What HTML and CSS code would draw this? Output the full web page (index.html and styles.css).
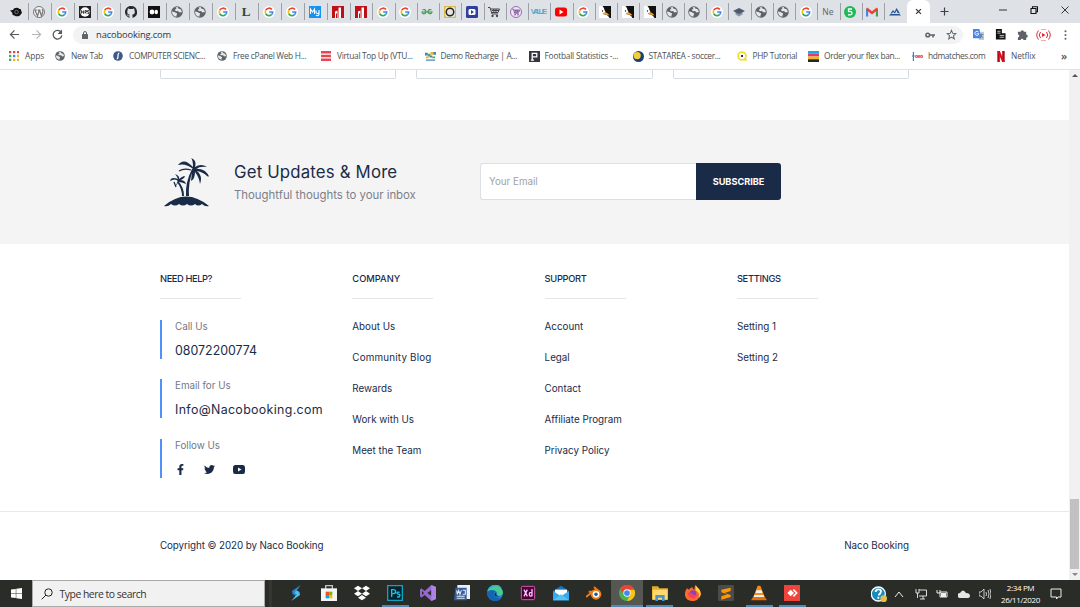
FILE: index.html
```html
<!DOCTYPE html>
<html lang="en">
<head>
<meta charset="utf-8">
<title>Naco Booking</title>
<link rel="stylesheet" href="styles.css">
</head>
<body>
<svg class="defs" width="0" height="0">
  <symbol id="g" viewBox="0 0 24 24"><circle cx="12" cy="12" r="12" fill="#fff"/><g fill="none" stroke-width="3.2"><path d="M18 7.2A7.4 7.4 0 0 0 5.5 8.5" stroke="#ea4335"/><path d="M5.5 8.5a7.4 7.4 0 0 0 0 7" stroke="#fbbc05"/><path d="M5.5 15.5A7.4 7.4 0 0 0 17 17.4" stroke="#34a853"/><path d="M12.3 12h7.1a7.4 7.4 0 0 1-2.4 5.4" stroke="#4285f4"/></g></symbol>
  <symbol id="globe" viewBox="0 0 24 24"><circle cx="12" cy="12" r="11.500" fill="#5f6368"/><path d="M2 11q6 0 8 3c3 0 3 2 1 4v3C6 21 2 17 2 11zM9 3l5-1q-1 3 1 3l5 2q1 3 2 5l-5 1q-1-3-4-3-5 1-5-2 0-2 3-2z" fill="#e5e8ea"/></symbol>
  <symbol id="red" viewBox="0 0 24 24"><path d="M0 0h24v24H0z" fill="#bd1118"/><path d="M6 24V11l5-2v15zM13 3h5v21h-5z" fill="#fff"/><path d="M8 15h2v9H8z" fill="#bd1118"/></symbol>
  <symbol id="bird" viewBox="0 0 24 24"><path d="M0 0h24v24H0z" fill="#fff"/><path d="M7 0h17v24h-3q-3-7-13-8 7-7-1-16z" fill="#111"/><path d="M8 12q8-1 13 7-7-1-14-4z" fill="#f3a32c"/><path d="M1 12c2-7 10-7 12 0-4 3-9 3-12 0z" fill="#fff"/><circle cx="7" cy="10" r="1.300" fill="#111"/></symbol>
  <symbol id="cart" viewBox="0 0 24 24"><path d="M0 3h4l4 13h12M5 6h18l-3 7H7M8 9h14M11 6l1 7M16 6v7" fill="none" stroke="currentColor" stroke-width="2"/><circle cx="9" cy="20" r="2.3" fill="currentColor"/><circle cx="18" cy="20" r="2.3" fill="currentColor"/></symbol>
</svg>

<div class="window">
  <div class="tabstrip">
    <div class="tabs">
      <span class="tab"><svg viewBox="0 0 24 24"><path d="M0 9l6-1c2-5 9-6 13-2 3 0 4 2 3 4 3 2 2 5 0 6-2 5-9 6-13 3-4 0-5-3-4-5z" fill="#111"/><circle cx="13" cy="12" r="3.500" fill="none" stroke="#8b9095" stroke-width="1.500"/></svg></span>
      <span class="tab"><svg viewBox="0 0 24 24"><circle cx="12" cy="12" r="11" fill="#f4f4f4" stroke="#777" stroke-width="2"/><path d="M3 8h5M4 8l5 12 3-9-1-3M9 8h6M13 8l4 12 3-10-2-4" fill="none" stroke="#777" stroke-width="2.4"/></svg></span>
      <span class="tab"><svg><use href="#g"/></svg></span>
      <span class="tab"><svg viewBox="0 0 24 24"><path d="M0 0h24v24H0z" fill="#222"/><circle cx="12" cy="12" r="9.5" fill="#fff"/><path d="M5 15V9l4 6V9M12 15V9h3v3h-3l3 3M20 9h-3v3h3v3h-3" fill="none" stroke="#222" stroke-width="1.6"/></svg></span>
      <span class="tab"><svg><use href="#g"/></svg></span>
      <span class="tab"><svg viewBox="0 0 16 16"><path fill="#24292e" d="M8 0C3.58 0 0 3.58 0 8c0 3.54 2.29 6.53 5.47 7.59.4.07.55-.17.55-.38v-1.49c-2.01.37-2.53-.49-2.69-.94-.09-.23-.48-.94-.82-1.13-.28-.15-.68-.52-.01-.53.63-.01 1.08.58 1.23.82.72 1.21 1.87.87 2.33.66.07-.52.28-.87.51-1.07-1.78-.2-3.64-.89-3.64-3.95 0-.87.31-1.59.82-2.15-.08-.2-.36-1.02.08-2.12 0 0 .67-.21 2.2.82a7.4 7.4 0 0 1 4 0c1.53-1.04 2.2-.82 2.2-.82.44 1.1.16 1.92.08 2.12.51.56.82 1.27.82 2.15 0 3.07-1.87 3.75-3.65 3.95.29.25.54.73.54 1.48v2.2c0 .21.15.46.55.38A8 8 0 0 0 8 0z"/></svg></span>
      <span class="tab"><svg viewBox="0 0 24 24"><path d="M0 0h24v24H0z" fill="#111"/><circle cx="8" cy="12" r="4.800" fill="#fff"/><ellipse cx="16.500" cy="12" rx="3.500" ry="4.600" fill="#fff"/></svg></span>
      <span class="tab"><svg><use href="#globe"/></svg></span>
      <span class="tab"><svg><use href="#globe"/></svg></span>
      <span class="tab"><svg><use href="#g"/></svg></span>
      <span class="tab letter-l">L</span>
      <span class="tab"><svg><use href="#g"/></svg></span>
      <span class="tab"><svg><use href="#g"/></svg></span>
      <span class="tab"><svg viewBox="0 0 24 24"><path d="M0 0h24v24H0z" fill="#1593ef"/><path d="M3 16V6l4 6 4-6v10M14 9v4q3 4 6 0V8v9q-2 4-6 1" fill="none" stroke="#fff" stroke-width="2.2"/></svg></span>
      <span class="tab"><svg><use href="#red"/></svg></span>
      <span class="tab"><svg><use href="#red"/></svg></span>
      <span class="tab"><svg><use href="#g"/></svg></span>
      <span class="tab"><svg><use href="#g"/></svg></span>
      <span class="tab"><svg viewBox="0 0 24 24"><path d="M3 8q5-3 7 3a4 4 0 1 1-8 1h20a4 4 0 1 1-8-1q2-6 7-3" fill="none" stroke="#459a55" stroke-width="2.4"/></svg></span>
      <span class="tab"><svg viewBox="0 0 24 24"><path d="M0 0h24v24H0z" fill="#dfb84a"/><path d="M4 2h16l2 4v12l-2 4H4l-2-4V6z" fill="#e8e5df"/><circle cx="12" cy="12" r="7.500" fill="#e8e5df" stroke="#222" stroke-width="3"/></svg></span>
      <span class="tab"><svg viewBox="0 0 24 24"><rect width="24" height="24" rx="3" fill="#303f9f"/><rect x="5" y="6" width="14" height="12" rx="3" fill="#fff"/><path d="M10 8l6 4-6 4z" fill="#303f9f"/></svg></span>
      <span class="tab"><svg color="#444"><use href="#cart"/></svg></span>
      <span class="tab"><svg viewBox="0 0 24 24" color="#67398d"><circle cx="12" cy="12" r="11" fill="#eee6f4" stroke="#9870b0" stroke-width="2"/><use href="#cart" x="4" y="4" width="16" height="16"/></svg></span>
      <span class="tab value">VALUE</span>
      <span class="tab"><svg viewBox="0 0 24 24"><rect y="3" width="24" height="18" rx="5" fill="red"/><path d="M9 7l8 5-8 5z" fill="#fff"/></svg></span>
      <span class="tab"><svg><use href="#g"/></svg></span>
      <span class="tab"><svg><use href="#bird"/></svg></span>
      <span class="tab"><svg><use href="#bird"/></svg></span>
      <span class="tab"><svg><use href="#bird"/></svg></span>
      <span class="tab"><svg><use href="#globe"/></svg></span>
      <span class="tab"><svg><use href="#globe"/></svg></span>
      <span class="tab"><svg><use href="#g"/></svg></span>
      <span class="tab"><svg viewBox="0 0 24 24"><path d="M5 11v6l7 4 7-4v-6" fill="#8997a5"/><path d="M0 10l12-6 12 6-12 6z" fill="#4b5b6b"/></svg></span>
      <span class="tab"><svg><use href="#globe"/></svg></span>
      <span class="tab"><svg><use href="#globe"/></svg></span>
      <span class="tab"><svg><use href="#g"/></svg></span>
      <span class="tab ne">Ne</span>
      <span class="tab"><svg viewBox="0 0 24 24"><circle cx="12" cy="12" r="12" fill="#1db954"/><path d="M16 6H9v5q7-1 7 3.500t-8 3" fill="none" stroke="#fff" stroke-width="2.600"/></svg></span>
      <span class="tab"><svg viewBox="0 0 24 24"><path d="M2 21V6" stroke="#4285f4" stroke-width="4.500"/><path d="M22 21V6" stroke="#34a853" stroke-width="4.500"/><path d="M1 5l11 9 11-9" fill="none" stroke="#ea4335" stroke-width="5"/></svg></span>
      <span class="tab"><svg viewBox="0 0 24 24"><path d="M0 19h24l-3-3H3zM3 15l5-7 3 4 4-8 7 11-5-1-2-5-3 6-4-3-2 3z" fill="#245591"/></svg></span>
    </div>
    <div class="tab-active"><svg viewBox="0 0 10 10"><path d="M1.500 1.500l7 7M8.500 1.500l-7 7" stroke="#333" stroke-width="1.700"/></svg></div>
    <svg class="plus" viewBox="0 0 10 10"><path d="M5 .5v9M.5 5h9" stroke="#3c4043" stroke-width="1.300"/></svg>
    <div class="controls">
      <svg viewBox="0 0 8 8"><path d="M0 4h8" stroke="#222" stroke-width=".9"/></svg>
      <svg viewBox="0 0 8 8"><path d="M1 2.500h5v5H1zM2.500 2V.8h5v5H6" fill="none" stroke="#111" stroke-width="1.100"/></svg>
      <svg viewBox="0 0 8 8"><path d="M.5.5l7 7M7.500.5l-7 7" stroke="#222" stroke-width=".9"/></svg>
    </div>
  </div>

  <div class="toolbar">
    <svg class="nav" viewBox="0 0 24 24"><path d="M22 12H4M12 3l-9 9 9 9" fill="none" stroke="#555a5f" stroke-width="2.600"/></svg>
    <svg class="nav" viewBox="0 0 24 24"><path d="M2 12h18M12 3l9 9-9 9" fill="none" stroke="#b4b7ba" stroke-width="2.600"/></svg>
    <svg class="nav" viewBox="0 0 24 24"><path d="M20 7a9.500 9.500 0 1 0 1.500 7" fill="none" stroke="#555a5f" stroke-width="2.800"/><path d="M22 1v10H12z" fill="#555a5f"/></svg>
    <div class="omnibox">
      <svg class="lock" viewBox="0 0 12 16"><rect y="6" width="12" height="10" rx="1" fill="#5f6368"/><path d="M3 7V4a3 3 0 0 1 6 0v3" fill="none" stroke="#5f6368" stroke-width="2"/></svg>
      <span class="url">nacobooking.com</span>
      <svg class="key" viewBox="0 0 20 12"><circle cx="5.500" cy="6" r="3.700" fill="none" stroke="#5f6368" stroke-width="3"/><path d="M9 6h11M16 6v5" stroke="#5f6368" stroke-width="3.200"/></svg>
      <svg class="star" viewBox="0 0 24 24"><path d="M12 3l2.700 6.500 7 .5-5.400 4.600 1.700 6.900-6-3.700-6 3.700 1.700-6.900L2.300 10l7-.5z" fill="none" stroke="#5f6368" stroke-width="2.200"/></svg>
    </div>
    <div class="ext">
      <svg viewBox="0 0 24 24"><path d="M9 6h15v18H13z" fill="#c5cbd2"/><path d="M0 0h14l4 20H0z" fill="#4c83e8"/><path d="M12 6.500a4.500 4.500 0 1 0 0 6V10H8" fill="none" stroke="#fff" stroke-width="2"/><path d="M16 12h7M19 10v2q0 5-3 8M18 14l4 6" fill="none" stroke="#4d6d9b" stroke-width="1.500"/></svg>
      <svg viewBox="0 0 24 24"><path d="M2 0h13v9h8v14H2z" fill="#111"/><path d="M5 5h7M5 9h7M10 14h10M10 18h10" stroke="#fff" stroke-width="1.600"/></svg>
      <svg viewBox="0 0 24 24"><path d="M2 6h6a3.500 3.500 0 1 1 7 0h5v6a3.500 3.500 0 1 1 0 7v5h-6a3 3 0 1 0-6 0H2v-6a3 3 0 1 0 0-6z" fill="#5f6368"/></svg>
      <svg class="cast" viewBox="0 0 30 24"><path d="M9 6q-5 6 0 12M21 6q5 6 0 12M5 3q-7 9 0 18M25 3q7 9 0 18" fill="none" stroke="#e02632" stroke-width="2"/><path d="M10 1h10M10 23h10" stroke="#ef8c93" stroke-width="1.500"/><path d="M12 8l7 4-7 4z" fill="#e02632"/></svg>
      <svg class="dots" viewBox="0 0 4 16"><g fill="#5f6368"><circle cx="2" cy="2" r="1.600"/><circle cx="2" cy="8" r="1.600"/><circle cx="2" cy="14" r="1.600"/></g></svg>
    </div>
  </div>

  <div class="bookmarks">
    <span class="bm b1"><svg viewBox="0 0 10 10"><path d="M0 1.200h2.300M4 1.200h2.300M8 1.200h2" stroke="#dc4b3e" stroke-width="2.300"/><path d="M0 5h2.300" stroke="#4aa461" stroke-width="2.300"/><path d="M4 5h2.300" stroke="#4285f4" stroke-width="2.300"/><path d="M8 5h2M4 8.800h2.300M8 8.800h2" stroke="#eab331" stroke-width="2.300"/><path d="M0 8.800h2.300" stroke="#4aa461" stroke-width="2.300"/></svg><span>Apps</span></span>
    <span class="bm b2"><svg><use href="#globe"/></svg><span>New Tab</span></span>
    <span class="bm b3"><svg viewBox="0 0 24 24"><circle cx="12" cy="12" r="11.500" fill="#405a86"/><path d="M15 5q-3 0-3 7t-3 7" fill="none" stroke="#fff" stroke-width="3"/></svg><span>COMPUTER SCIENC...</span></span>
    <span class="bm b4"><svg><use href="#globe"/></svg><span>Free cPanel Web H...</span></span>
    <span class="bm b5"><svg viewBox="0 0 10 10"><path d="M0 1.300h10M0 5h10M0 8.700h10" stroke="#e64653" stroke-width="2.400"/></svg><span>Virtual Top Up (VTU...</span></span>
    <span class="bm b6"><svg viewBox="0 0 12 10"><path d="M0 1h3v3H0zM5 4h3v2H5zM9 0h3v3H9z" fill="#3d85b8"/><path d="M3 2h3v3H3zM8 5h3v2H8z" fill="#56a659"/><path d="M6 0h3v3H6zM1 5h3v2H1z" fill="#e8b23b"/><path d="M1 8h10v2H1z" fill="#7ca7d4"/></svg><span>Demo Recharge | A...</span></span>
    <span class="bm b7"><svg viewBox="0 0 24 24"><path d="M0 0h24v24H0z" fill="#353642"/><path d="M7 20V5h10v8H7M4 20h7" fill="none" stroke="#fff" stroke-width="2.800"/></svg><span>Football Statistics -...</span></span>
    <span class="bm b8"><svg viewBox="0 0 24 24"><circle cx="12" cy="12" r="12" fill="#183f77"/><circle cx="9" cy="10" r="8" fill="#f2cd3c"/></svg><span>STATAREA - soccer...</span></span>
    <span class="bm b9"><svg viewBox="0 0 24 24"><circle cx="12" cy="12" r="9.500" fill="#fff" stroke="#f0df25" stroke-width="4"/><circle cx="12" cy="12" r="2.600"/><path d="M17 21h7" stroke="#f0df25" stroke-width="4"/></svg><span>PHP Tutorial</span></span>
    <span class="bm b10"><svg viewBox="0 0 12 12"><path d="M0 0h12v3H0z" fill="#19a9df"/><path d="M0 3h12v3H0z" fill="#dc3a79"/><path d="M0 6h12v3H0z" fill="#f3b71c"/><path d="M0 9h12v3H0z" fill="#252525"/></svg><span>Order your flex ban...</span></span>
    <span class="bm b11"><svg viewBox="0 0 24 24"><path d="M3 2v20M0 11h6" stroke="#3e78ac" stroke-width="2.500"/><path d="M8 10h4v4H8zM14 10h3v4h-3zM19 10h4v4h-4z" fill="none" stroke="#d9444d" stroke-width="2"/></svg><span>hdmatches.com</span></span>
    <span class="bm b12"><svg viewBox="0 0 8 12"><path d="M0 0h2.700v12H0zM5.300 0H8v12H5.300z" fill="#b20710"/><path d="M0 0h2.700L8 12H5.300z" fill="#e50914"/></svg><span>Netflix</span></span>
    <span class="more">»</span>
  </div>

  <div class="viewport">
    <main class="page">
      <div class="cards"><div></div><div></div><div></div></div>
      <section class="newsletter">
        <svg class="palm" viewBox="0 0 46 49"><g fill="#1a2b48"><path d="M0 48q22-19 45 0-4 1-7-2-4 3-7 0-4 3-8 0-4 3-8 0-4 3-8 0-3 3-7 2z"/><path d="M22 38q-1-13 6-27l1 1q-5 13-4 26zM20 38q0-9-6-15l-1 1q5 7 5 14z"/><path d="M29 11Q22 5 14 7q6-8 15 2Q29 2 27 0q6 2 4 9 6-4 12 0-7-1-11 2 10-1 13 8-6-5-12-6 6 5 3 13-1-7-5-12 0 7-4 9 1-8 1-12z"/><path d="M14 23q-3-3-8 0 1-5 8-2-1-3-3-5 5 2 4 5 4-3 6-3-1 3-5 4 5 0 6 4-4-2-8-2 0 2-3 5z"/></g><path d="M27 12q-7-2-12 1M32 11q8 2 12 7M10 24l2 5M15 22l5-3" stroke="#1a2b48" stroke-width="1.300" fill="none"/></svg>
        <div class="pitch"><h2>Get Updates &amp; More</h2><p>Thoughtful thoughts to your inbox</p></div>
        <form class="subscribe"><span class="email">Your Email</span><span class="button">SUBSCRIBE</span></form>
      </section>
      <footer>
        <div class="columns">
          <section class="col">
            <h3 class="h-need">NEED HELP?</h3>
            <div class="contact"><small>Call Us</small><strong class="phone">08072200774</strong></div>
            <div class="contact"><small>Email for Us</small><strong>Info@Nacobooking.com</strong></div>
            <div class="contact"><small>Follow Us</small>
              <div class="social">
                <svg viewBox="0 0 320 512"><path d="M279 288l14-93h-89v-60c0-25 12-50 52-50h41V7s-37-7-72-7c-73 0-121 44-121 125v70H23v93h81v224h100V288z"/></svg>
                <svg viewBox="0 0 512 512"><path d="M459 152c0 5 0 9 0 14 0 139-106 299-299 299-59 0-115-17-161-47 8 1 16 1 25 1 49 0 94-16 130-45-46-1-85-31-98-73 7 1 13 2 20 2 9 0 19-1 28-4-48-10-84-52-84-103v-1c14 8 30 13 47 13-28-19-47-51-47-87 0-19 5-37 14-53 52 64 129 105 217 110-2-8-3-16-3-24 0-58 47-105 105-105 30 0 58 13 77 33 24-5 46-13 67-25-8 24-24 45-46 58 21-2 42-8 60-16-14 21-32 39-52 54z"/></svg>
                <svg class="yt" viewBox="0 0 24 18"><path fill-rule="evenodd" d="M4 0h16q4 0 4 5v8q0 5-4 5H4q-4 0-4-5V5q0-5 4-5zm6 5v8l7-4z"/></svg>
              </div>
            </div>
          </section>
          <section class="col"><h3 class="h-company">COMPANY</h3><a>About Us</a><a class="wide">Community Blog</a><a>Rewards</a><a>Work with Us</a><a>Meet the Team</a></section>
          <section class="col"><h3>SUPPORT</h3><a>Account</a><a>Legal</a><a>Contact</a><a>Affiliate Program</a><a>Privacy Policy</a></section>
          <section class="col"><h3>SETTINGS</h3><a>Setting 1</a><a>Setting 2</a></section>
        </div>
        <div class="legal"><span class="copyright">Copyright © 2020 by Naco Booking</span><span>Naco Booking</span></div>
      </footer>
    </main>
    <div class="scrollbar"><i class="up"></i><b></b><i class="down"></i></div>
  </div>

  <div class="taskbar">
    <div class="start"><svg viewBox="0 0 24 24"><path d="M0 3.500L10.500 2v9.500H0zM11.500 1.800L24 0v11.500H11.500zM0 12.500h10.500V22L0 20.500zM11.500 12.500H24V24l-12.500-1.800z" fill="#fff"/></svg></div>
    <div class="search"><svg viewBox="0 0 12 12"><circle cx="7.500" cy="4.500" r="3.700" fill="none" stroke="#222"/><path d="M5 7L.7 11.300" stroke="#222"/></svg><span>Type here to search</span></div>
    <div class="apps">
      <span><svg viewBox="0 0 24 24"><path d="M19 0L6 9l1 5 5 2 2-4-2-2z" fill="#2587d5"/><path d="M5 24l13-9-1-5-5-2-2 4 3 2z" fill="#4cc3ee"/></svg></span>
      <span><svg viewBox="0 0 24 24"><path d="M7 6V1h10v5" fill="none" stroke="#c5c5c5" stroke-width="2"/><path d="M0 5h24v19H0z" fill="#f5f5f5"/><path d="M7 10h5v5H7z" fill="#f25022"/><path d="M12 10h5v5h-5z" fill="#7fba00"/><path d="M7 15h5v5H7z" fill="#00a4ef"/><path d="M12 15h5v5h-5z" fill="#ffb900"/></svg></span>
      <span><svg viewBox="0 0 24 24"><path d="M6 1l6 4-6 4-6-4zM18 1l6 4-6 4-6-4zM6 9l6 4-6 4-6-4zM18 9l6 4-6 4-6-4zM12 15l6 4-6 4-6-4z" fill="#fff"/></svg></span>
      <span class="open"><svg viewBox="0 0 24 24"><path d="M1 1h22v22H1z" fill="#06232f" stroke="#10a3c2" stroke-width="2"/><path d="M7 18V7h2q4 0 4 3t-5 3M19 11q-4-1-4 1t3 2 0 4h-3" fill="none" stroke="#22c0de" stroke-width="2"/></svg></span>
      <span><svg viewBox="0 0 24 24"><path d="M17 0l7 3v18l-7 3L7 15l-5 4-2-2V7l2-2 5 4zM3 9v6l3-3zm14-1l-6 4 6 4z" fill="#9468ce" fill-rule="evenodd"/><path d="M17 0l7 3v18l-7 3z" fill="#ae83e5"/></svg></span>
      <span><svg viewBox="0 0 24 24"><path d="M5 0h19v21H5z" fill="#eef3fb"/><path d="M2 4h17v19H0z" fill="#345d9e"/><path d="M4 8l1 6 2-6 2 6 2-6M13 8h4v6h-4M4 17h12M4 20h12M8 2h13M22 4v14" fill="none" stroke="#e4ebf5" stroke-width="1.600"/></svg></span>
      <span><svg viewBox="0 0 24 24"><circle cx="12" cy="12" r="12" fill="#1685cf"/><path d="M1 9C4-3 21-3 24 11c0 6-8 7-9 3 2-5-6-9-14-5z" fill="#49cb8e"/><path d="M0 11C3-3 19-3 22 5 14-1 6 3 1 9z" fill="#32add8"/><path d="M0 11q7-6 13-1-5 2-2 7 4 4 11 2-5 7-14 4-8-4-8-12z" fill="#1464b5"/><path d="M14 11q-2 2 1 5l3 1q-5 1-7-2 0-3 3-4z" fill="#292c27"/></svg></span>
      <span><svg viewBox="0 0 24 24"><rect x="2" y="2" width="20" height="20" rx="2" fill="#470137" stroke="#d557b6" stroke-width="1.500"/><path d="M6 7l5 10M11 7L6 17M18 6v11M18 12q-4-2-4 2t4 2" fill="none" stroke="#ffc3f5" stroke-width="2"/></svg></span>
      <span><svg viewBox="0 0 24 24"><path d="M0 9l12-8 12 8v14H0z" fill="#1775bf"/><path d="M3 7h18v11H3z" fill="#fff"/><path d="M0 9l12 8 12-8v14H0z" fill="#35a9eb"/><path d="M0 23l12-9 12 9z" fill="#55c2f5"/></svg></span>
      <span><svg viewBox="0 0 24 24"><path d="M12 3l8 7M4 10h10M0 18l9-7" stroke="#ed7b17" stroke-width="3"/><circle cx="15" cy="14" r="8" fill="#ed7b17"/><circle cx="15" cy="14" r="5" fill="#fff"/><circle cx="15" cy="14" r="2.700" fill="#235c92"/></svg></span>
      <span class="open current"><svg viewBox="0 0 24 24"><circle cx="12" cy="12" r="12" fill="#4caf50"/><path d="M1.600 6A12 12 0 0 1 23 7H12L8 15z" fill="#e94335"/><path d="M23 7A12 12 0 0 1 12 24l5-10-3-7z" fill="#fbc116"/><circle cx="12" cy="12" r="5.500" fill="#fff"/><circle cx="12" cy="12" r="4.300" fill="#4285f4"/></svg></span>
      <span class="open"><svg viewBox="0 0 24 24"><path d="M0 2h9l2 3h13v17H0z" fill="#e6aa24"/><path d="M1 7h22v15H1z" fill="#ffda73"/><path d="M5 24v-9h14v9h-4v-5H9v5z" fill="#4796d0"/></svg></span>
      <span><svg viewBox="0 0 24 24"><path d="M3 5l3 2q2-3 5-4 0 3 3 4 0-5 2-7 2 4 5 6 5 6 1 12-4 7-12 6-8-1-10-8-1-6 3-11z" fill="#ff692d"/><path d="M16 0q2 4 5 6 5 7 0 14 2-8-5-12z" fill="#ffd53a"/><circle cx="12" cy="13" r="5" fill="#8545bd"/><path d="M4 12q6-2 8 2 3 3 7-1-2 8-9 7-5-2-6-8z" fill="#f3415e"/></svg></span>
      <span><svg viewBox="0 0 24 24"><rect width="24" height="24" rx="2" fill="#4b4b4b"/><path d="M19 4v5l-9 3 9 3v3L5 22v-5l9-3-9-3V7z" fill="#ff9800"/></svg></span>
      <span class="open"><svg viewBox="0 0 24 24"><path d="M10 1h4l7 18H3z" fill="#f58b1c"/><path d="M8 8h8l1 4H7zM5 15h14l1 3H4z" fill="#f1f1f1"/><path d="M3 18h18l3 5H0z" fill="#e76d0b"/></svg></span>
      <span class="open"><svg viewBox="0 0 24 24"><path d="M0 0h24v24H0z" fill="#ef443b"/><path d="M10 7l5 5-5 5-5-5z" fill="#fff"/><path d="M14 7l5 5-5 5" fill="none" stroke="#fff" stroke-width="2.500"/></svg></span>
    </div>
    <div class="tray">
      <svg class="help" viewBox="0 0 24 24"><circle cx="11" cy="12" r="10.500" fill="#168bc0" stroke="#fff" stroke-width="2"/><path d="M7 9q0-4 4-4t4 3-4 6M11 16v3" fill="none" stroke="#fff" stroke-width="2.700"/><circle cx="19" cy="19" r="5" fill="#e7bd4d"/></svg>
      <svg viewBox="0 0 12 12"><path d="M2 9l4-5 4 5" fill="none" stroke="#eee"/></svg>
      <svg viewBox="0 0 12 12"><path d="M4 2h7.500v6H4M8 8v3M5 11h5M1 1v4h3V1M2.500 5v5" fill="none" stroke="#eee" stroke-width=".9"/></svg>
      <svg viewBox="0 0 12 12"><path d="M4 4h7v5H4zM1 2v3h3V2" fill="none" stroke="#eee"/><path d="M5 5h5v4H5z" fill="#eee"/></svg>
      <svg viewBox="0 0 12 12"><path d="M2 10a2.500 2.500 0 0 1 0-5q3-5 6 0 4 0 4 3 0 2-2 2z" fill="#e5e5e5"/></svg>
      <svg viewBox="0 0 12 12"><path d="M0 4h2l3-3v10L2 8H0zM7 4q1 2 0 4M9 2q2 4 0 8M11 1q2 5 0 10" fill="none" stroke="#eee" stroke-width=".8"/></svg>
    </div>
    <div class="clock"><span>2:34 PM</span><span>26/11/2020</span></div>
    <svg class="notice" viewBox="0 0 12 12"><path d="M1 1h10v8H8l-1.500 2V9H1z" fill="none" stroke="#eee"/></svg>
  </div>
</div>
</body>
</html>
```
FILE: styles.css
```css
* { box-sizing: border-box; }
body { margin: 0; width: 1080px; height: 607px; overflow: hidden; background: #fff; font-family: Inter, "Noto Sans", sans-serif; color: #1a2b48; }
svg { display: block; flex: none; }
h2, h3, p { margin: 0; font-weight: 400; }
.defs { position: absolute; }
.window { display: grid; grid-template-rows: 23px 23px 24px 510px 27px; width: 1080px; height: 607px; }

.tabstrip { display: flex; background: #dee1e6; font-family: "Open Sans", sans-serif; }
.tabs { display: flex; flex: none; width: 901px; padding-left: 6px; }
.tab { display: flex; flex: none; align-items: center; justify-content: center; width: 22.250px; height: 17px; margin-top: 3px; padding-right: 2px; border-right: 1px solid #9da1a6; }
.tab:nth-child(-n+15) { width: 23px; }
.tab:last-child { border-right: 0; }
.tab svg { width: 12px; height: 12px; }
.letter-l { font: bold 13px "Liberation Serif", serif; color: #2f482f; }
.value { font: bold 8px "Liberation Sans", sans-serif; letter-spacing: -2.600px; color: #60aaca; padding-right: 4px; }
.ne { font-size: 8.500px; color: #5f6368; }
.tab-active { display: flex; align-items: center; justify-content: center; width: 23px; margin-left: 6px; background: #fff; border-radius: 6px 6px 0 0; }
.tab-active svg { width: 7px; height: 7px; }
.plus { width: 9px; height: 9px; margin: 7px 0 0 10px; }
.controls { display: flex; gap: 23px; margin: 6px 0 0 49.500px; }
.controls svg { width: 8px; height: 8px; }

.toolbar { display: flex; align-items: center; }
.nav { width: 11px; height: 11px; margin-left: 9px; margin-right: 1.700px; }
.omnibox { display: flex; align-items: center; width: 890px; height: 18px; margin-left: 8px; padding: 0 6px 0 9px; border-radius: 9px; background: #f1f3f4; }
.lock { width: 6px; height: 8px; }
.url { flex: 1; margin-left: 8px; font: 9.300px/18px "Open Sans", sans-serif; color: #303338; letter-spacing: -.13px; }
.key { width: 10px; height: 6px; margin-right: 11px; }
.star { width: 11px; height: 11px; }
.ext { display: flex; align-items: center; gap: 11px; margin-left: 10px; }
.ext svg { width: 11px; height: 11px; }
.ext .cast { width: 15px; height: 12px; margin-left: -3px; }
.ext .dots { width: 3px; height: 10px; margin-left: 2px; }

.bookmarks { display: flex; align-items: center; padding: 0 0 3px 9px; border-bottom: 1px solid #dfe1e4; font: 8.400px/18px "Open Sans", sans-serif; color: #4d5156; white-space: nowrap; }
.bm { display: flex; align-items: center; gap: 6px; flex: none; letter-spacing: -.32px; }
.bm svg { width: 10px; height: 10px; }
.bm.b1 { width: 46px; letter-spacing: -.1px; } .bm.b2 { width: 58px; } .bm.b3 { width: 104px; } .bm.b4 { width: 104px; }
.bm.b5 { width: 103.500px; } .bm.b6 { width: 104px; } .bm.b7 { width: 104px; letter-spacing: -.24px; } .bm.b8 { width: 104px; }
.bm.b9 { width: 71.500px; } .bm.b10 { width: 104px; } .bm.b11 { width: 85px; letter-spacing: -.4px; } .bm.b12 { width: 64px; letter-spacing: -.15px; }
.bm.b6 svg, .bm.b7 svg, .bm.b8 svg, .bm.b10 svg, .bm.b11 svg { width: 11px; height: 11px; margin-right: -1px; }
.bm.b12 svg { width: 8px; height: 11px; }
.more { font-size: 11px; font-weight: 600; }

.viewport { display: grid; grid-template-columns: 1069px 11px; overflow: hidden; }
.page { display: grid; grid-template-rows: 49.500px 124.500px 336px; }
.cards { display: grid; grid-template-columns: 236px 237px 236px; gap: 20px; padding-left: 160px; height: 9px; }
.cards div { border: 1px solid #d6dce2; border-top: 0; border-radius: 0 0 2px 2px; }
.newsletter { display: flex; align-items: center; background: #f4f4f4; padding-left: 164px; }
.palm { width: 46px; height: 49px; margin-top: 2px; }
.pitch { width: 246px; margin-left: 24px; margin-top: 2px; white-space: nowrap; }
.pitch h2 { font-size: 16.800px; line-height: 25px; letter-spacing: .17px; }
.pitch p { font-size: 11.400px; line-height: 21px; letter-spacing: -.02px; color: #7b8088; }
.subscribe { display: flex; width: 301px; height: 37px; margin-top: -.5px; font-size: 9.800px; }
.email { display: flex; align-items: center; width: 216px; padding-left: 8px; background: #fff; border: 1px solid #dae0e5; border-right: 0; border-radius: 3px 0 0 3px; color: #a0a3a5; }
.button { display: flex; align-items: center; justify-content: center; width: 85px; background: #1a2b48; border-radius: 0 3px 3px 0; color: #fff; font-size: 9.200px; font-weight: 700; letter-spacing: -.03px; }

footer { display: grid; grid-template-rows: 267px 69px; }
.columns { display: grid; grid-template-columns: repeat(4, 192.300px); padding: 23px 0 0 160px; }
.col { display: flex; flex-direction: column; align-items: flex-start; }
.col h3 { width: 81px; height: 32px; margin-bottom: 20px; border-bottom: 1px solid #e4e6e8; font-size: 9.300px; line-height: 23px; font-weight: 500; letter-spacing: -.3px; white-space: nowrap; }
.col .h-need { margin-bottom: 21px; letter-spacing: -.4px; }
.col .h-company { letter-spacing: .03px; }
.col a { font-size: 9.800px; line-height: 15px; margin-bottom: 16px; white-space: nowrap; }
.col .wide { letter-spacing: .2px; }
.contact { display: flex; flex-direction: column; height: 39px; margin-bottom: 20.400px; padding-left: 13px; border-left: 2px solid #5191fa; }
.contact small { font-size: 9.800px; line-height: 15px; margin-top: -1px; color: #737983; }
.contact strong { font-size: 12.400px; line-height: 18px; margin-top: 8px; font-weight: 400; letter-spacing: .34px; white-space: nowrap; }
.contact .phone { letter-spacing: 0; }
.social { display: flex; align-items: center; gap: 18px; margin-top: 11px; }
.social svg { width: 11px; height: 11px; fill: #1a2b48; }
.social .yt { width: 12px; height: 9px; }
.legal { display: flex; justify-content: space-between; padding: 26px 160px 0; border-top: 1px solid #e6e8ea; font-size: 9.800px; line-height: 16px; }
.copyright { letter-spacing: -.08px; }
.scrollbar { display: flex; flex-direction: column; align-items: center; background: #f1f1f1; }
.scrollbar b { width: 9px; height: 70px; margin-top: 422px; background: #c1c1c1; }
.scrollbar .up { margin-top: 4px; border: 3px solid transparent; border-top: 0; border-bottom: 3px solid #555; }
.scrollbar .down { margin-top: 4px; border: 3px solid transparent; border-bottom: 0; border-top: 3px solid #888; }

.taskbar { display: flex; background: #292c27; font-family: "Open Sans", sans-serif; }
.start { display: flex; align-items: center; justify-content: center; width: 32px; }
.start svg { width: 11px; height: 11px; }
.search { display: flex; align-items: center; flex: none; width: 233px; padding-left: 8px; background: #f1f1f1; border: 1px solid #aaa; font-size: 10.400px; letter-spacing: -.47px; color: #333; }
.search svg { width: 12px; height: 12px; margin-right: 6.500px; }
.apps { display: flex; flex: none; margin-left: 4px; padding-left: 10.700px; border-left: 3px solid #343731; }
.apps span { display: flex; align-items: center; justify-content: center; width: 27px; margin-right: 6.070px; border-bottom: 2px solid transparent; }
.apps svg { width: 16px; height: 16px; }
.apps .open { border-bottom-color: #5189b3; }
.apps .current { width: 32px; margin-left: -2.500px; margin-right: 3.570px; background: #555852; }
.tray { display: flex; align-items: center; gap: 9.500px; margin-left: 59.300px; }
.tray svg { width: 12px; height: 12px; }
.tray .help { width: 16px; height: 16px; margin-right: -3px; }
.clock { display: flex; flex: none; flex-direction: column; align-items: center; justify-content: center; width: 42px; margin-left: 8px; font-size: 8px; line-height: 12px; letter-spacing: -.35px; color: #fff; }
.notice { width: 12px; height: 12px; margin: 8px 0 0 9px; }
```
